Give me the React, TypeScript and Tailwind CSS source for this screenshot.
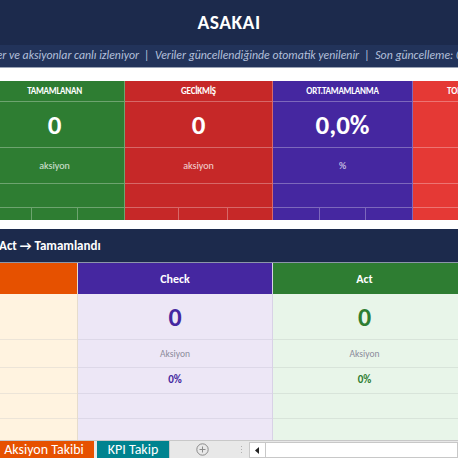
import React from "react";

const font = { fontFamily: "Carlito, Lato, 'Open Sans', sans-serif" };

function KpiCard({ title, value, unit, bg, width, cells }: { title: string; value: string; unit: string; bg: string; width: string; cells: string[] }) {
  return (
    <div className={`${bg} ${width} shrink-0 flex flex-col border-r border-white/30 text-white`}>
      <div className="h-[21px] flex items-center justify-center border-b border-white/30 text-[9px] font-bold tracking-tight whitespace-nowrap overflow-hidden">{title}</div>
      <div className="h-[46px] flex items-center justify-center border-b border-white/30 text-[27px] font-bold leading-none">{value}</div>
      <div className="h-[36px] flex items-center justify-center border-b border-white/30 text-[10px] text-white/80">{unit}</div>
      <div className="h-[24px] border-b border-white/30"></div>
      <div className="h-[12px] flex">
        {cells.map((w, i) => (
          <div key={i} className={`${w} h-full ${i < cells.length - 1 ? "border-r border-white/30" : ""}`}></div>
        ))}
      </div>
    </div>
  );
}

export default function App() {
  return (
    <div className="w-[458px] h-[458px] overflow-hidden bg-white flex flex-col" style={font}>
      <div className="h-[45px] shrink-0 bg-[#1c2a4c] flex items-center justify-center">
        <span className="text-white font-bold text-[19.5px] tracking-wide">ASAKAI</span>
      </div>
      <div className="h-[23px] shrink-0 bg-[#22335a] border-b border-[#9aa3b5] flex items-center overflow-hidden">
        <span className="whitespace-nowrap italic text-[11.8px] text-[#b4c0dc] ml-[-6px]">
          ler ve aksiyonlar canlı izleniyor&nbsp;&nbsp;|&nbsp;&nbsp;Veriler güncellendiğinde otomatik yenilenir&nbsp;&nbsp;|&nbsp;&nbsp;Son güncelleme: 08.06.2025
        </span>
      </div>
      <div className="h-[13px] shrink-0 bg-white"></div>
      <div className="h-[139px] shrink-0 flex overflow-hidden">
        <KpiCard title="TAMAMLANAN" value="0" unit="aksiyon" bg="bg-[#2e7d32] ml-[-15px]" width="w-[140px]" cells={["w-[47px]", "w-[46px]", "flex-1"]} />
        <KpiCard title="GECİKMİŞ" value="0" unit="aksiyon" bg="bg-[#c62828]" width="w-[148px]" cells={["w-[54px]", "w-[49px]", "flex-1"]} />
        <KpiCard title="ORT.TAMAMLANMA" value="0,0%" unit="%" bg="bg-[#4527a0]" width="w-[140px]" cells={["w-[47px]", "w-[46px]", "flex-1"]} />
        <div className="bg-[#e53935] flex-1 flex flex-col text-white">
          <div className="h-[21px] flex items-center border-b border-white/30 text-[9px] font-bold pl-[34px] whitespace-nowrap">TOPLAM</div>
          <div className="h-[46px] border-b border-white/30"></div>
          <div className="h-[36px] border-b border-white/30"></div>
          <div className="h-[24px] border-b border-white/30"></div>
          <div className="h-[12px]"></div>
        </div>
      </div>
      <div className="h-[9px] shrink-0 bg-white"></div>
      <div className="h-[34px] shrink-0 bg-[#1c2a4c] border-b border-[#8c96aa] flex items-center overflow-hidden">
        <span className="whitespace-nowrap text-white font-bold text-[13px] ml-[-1px]">Act → Tamamlandı</span>
      </div>
      <div className="flex-1 flex">
        <div className="w-[78px] shrink-0 flex flex-col bg-[#fff3e0] border-r border-[#e6dccc]">
          <div className="h-[31px] bg-[#e65100]"></div>
          <div className="h-[46px] border-b border-[#ece4d8]"></div>
          <div className="h-[28px] border-b border-[#ece4d8]"></div>
          <div className="h-[26px] border-b border-[#ece4d8]"></div>
          <div className="h-[25px] border-b border-[#ece4d8]"></div>
          <div className="flex-1"></div>
        </div>
        <div className="w-[195px] shrink-0 flex flex-col bg-[#ede7f6] border-r border-[#d8d2e6]">
          <div className="h-[31px] bg-[#4527a0] flex items-center justify-center text-white font-bold text-[12px]">Check</div>
          <div className="h-[46px] border-b border-[#ddd8e8] flex items-center justify-center text-[#4527a0] font-bold text-[26px] leading-none">0</div>
          <div className="h-[28px] border-b border-[#ddd8e8] flex items-center justify-center pt-[2px] text-[#8a8a9a] text-[9.5px]">Aksiyon</div>
          <div className="h-[26px] border-b border-[#ddd8e8] flex items-center justify-center text-[#4527a0] font-bold text-[11px]">0%</div>
          <div className="h-[25px] border-b border-[#ddd8e8]"></div>
          <div className="flex-1"></div>
        </div>
        <div className="flex-1 flex flex-col bg-[#e8f5e9]">
          <div className="h-[31px] bg-[#2e7d32] flex items-center justify-center text-white font-bold text-[12px] pr-[2px]">Act</div>
          <div className="h-[46px] border-b border-[#d8e4da] flex items-center justify-center text-[#2e7d32] font-bold text-[26px] leading-none pr-[2px]">0</div>
          <div className="h-[28px] border-b border-[#d8e4da] flex items-center justify-center pt-[2px] text-[#8a8a9a] text-[9.5px] pr-[2px]">Aksiyon</div>
          <div className="h-[26px] border-b border-[#d8e4da] flex items-center justify-center text-[#2e7d32] font-bold text-[11px] pr-[2px]">0%</div>
          <div className="h-[25px] border-b border-[#d8e4da]"></div>
          <div className="flex-1"></div>
        </div>
      </div>
      <div className="h-[18px] shrink-0 bg-[#e8e8e8] border-t border-[#c8c8c8] flex items-stretch">
        <div className="w-[94px] bg-[#e65100] text-white text-[14px] flex items-center justify-center leading-none pr-[6px]">Aksiyon Takibi</div>
        <div className="w-[3px]"></div>
        <div className="w-[72px] bg-[#00838f] text-white text-[14px] flex items-center justify-center leading-none">KPI Takip</div>
        <div className="w-[1px] bg-[#c8c8c8]"></div>
        <div className="w-[65px] flex items-center justify-center">
          <svg width="13" height="13" viewBox="0 0 13 13">
            <circle cx="6.5" cy="6.5" r="5.7" fill="none" stroke="#8a8a8a" strokeWidth="1" />
            <path d="M6.5 3.5v6M3.5 6.5h6" stroke="#8a8a8a" strokeWidth="1" />
          </svg>
        </div>
        <div className="w-[12px] flex flex-col items-center justify-center gap-[2px]">
          <div className="w-[1px] h-[1px] bg-[#b0b0b0]"></div>
          <div className="w-[1px] h-[1px] bg-[#b0b0b0]"></div>
          <div className="w-[1px] h-[1px] bg-[#b0b0b0]"></div>
        </div>
        <div className="w-[2px]"></div>
        <div className="flex-1 flex bg-white border border-[#c8c8c8] mt-[1px]">
          <div className="w-[16px] border-r border-[#c8c8c8] flex items-center justify-center">
            <svg width="5" height="7" viewBox="0 0 5 7"><path d="M4 0L0 3.5L4 7Z" fill="#222" /></svg>
          </div>
          <div className="flex-1"></div>
        </div>
      </div>
    </div>
  );
}
